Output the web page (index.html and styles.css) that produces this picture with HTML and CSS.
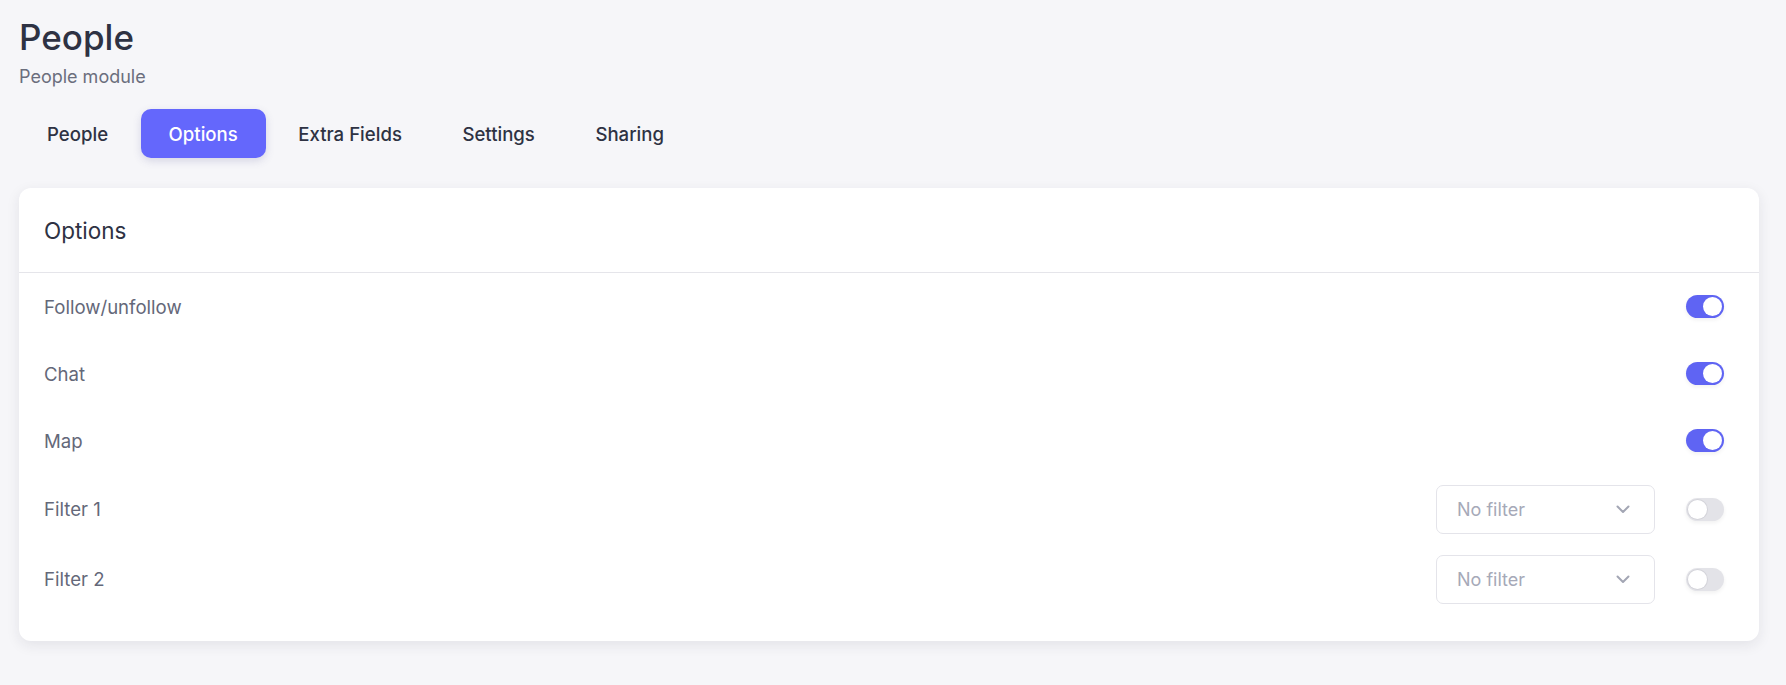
FILE: index.html
```html
<!DOCTYPE html>
<html lang="en">
<head>
  <meta charset="UTF-8">
  <meta name="viewport" content="width=device-width, initial-scale=1.0">
  <title>People</title>
  <link rel="stylesheet" href="styles.css">
</head>
<body>
  <div class="page">
    <h1 class="page-title">People</h1>
    <div class="page-subtitle">People module</div>

    <nav class="tabs">
      <a class="tab">People</a>
      <a class="tab active">Options</a>
      <a class="tab">Extra Fields</a>
      <a class="tab">Settings</a>
      <a class="tab">Sharing</a>
    </nav>

    <div class="card">
      <div class="card-header">Options</div>
      <div class="card-body">
        <div class="option-row">
          <span class="option-label">Follow/unfollow</span>
          <span class="switch on"><span class="knob"></span></span>
        </div>
        <div class="option-row">
          <span class="option-label">Chat</span>
          <span class="switch on"><span class="knob"></span></span>
        </div>
        <div class="option-row">
          <span class="option-label">Map</span>
          <span class="switch on"><span class="knob"></span></span>
        </div>
        <div class="option-row tall">
          <span class="option-label">Filter 1</span>
          <div class="controls">
            <div class="select">
              <span>No filter</span>
              <svg width="14" height="9" viewBox="0 0 14 9"><path d="M1.5 1.5 L7 7 L12.5 1.5" fill="none" stroke="#a3a6b4" stroke-width="2" stroke-linecap="round" stroke-linejoin="round"/></svg>
            </div>
            <span class="switch"><span class="knob"></span></span>
          </div>
        </div>
        <div class="option-row tall">
          <span class="option-label">Filter 2</span>
          <div class="controls">
            <div class="select">
              <span>No filter</span>
              <svg width="14" height="9" viewBox="0 0 14 9"><path d="M1.5 1.5 L7 7 L12.5 1.5" fill="none" stroke="#a3a6b4" stroke-width="2" stroke-linecap="round" stroke-linejoin="round"/></svg>
            </div>
            <span class="switch"><span class="knob"></span></span>
          </div>
        </div>
      </div>
    </div>
  </div>
</body>
</html>
```

FILE: styles.css
```css
body {
  margin: 0;
  padding: 0;
  font-family: Inter, "Noto Sans", sans-serif;
  background: #f6f6f9;
  color: #2e3243;
}

.page {
  padding: 14px 27px 40px 19px;
}

.page-title {
  margin: 0;
  font-size: 35px;
  font-weight: 500;
  line-height: 46px;
  color: #2e3243;
}

.page-subtitle {
  margin-top: 6px;
  font-size: 18px;
  line-height: 22px;
  color: #6b6e7d;
}

.tabs {
  display: flex;
  gap: 4.5px;
  margin-top: 21px;
}

.tab {
  display: flex;
  align-items: center;
  height: 49px;
  padding: 0 28px;
  border-radius: 10px;
  font-size: 18.6px;
  font-weight: 500;
  color: #2e3243;
  cursor: pointer;
}

.tab.active {
  background: #6467fc;
  color: #fff;
  box-shadow: 0 3px 8px rgba(70, 72, 140, 0.18);
}

.card {
  margin-top: 30px;
  background: #fff;
  border-radius: 12px;
  box-shadow: 0 4px 14px rgba(30, 30, 60, 0.09);
}

.card-header {
  height: 84px;
  display: flex;
  align-items: center;
  padding: 0 25px;
  font-size: 22.5px;
  font-weight: 400;
  color: #2e3243;
  border-bottom: 1px solid #e5e5ea;
}

.card-body {
  padding: 0 35px 27px 25px;
}

.option-row {
  display: flex;
  align-items: center;
  justify-content: space-between;
  height: 67px;
}

.option-row.tall {
  height: 70px;
}

.option-label {
  font-size: 18.6px;
  color: #646879;
}

.controls {
  display: flex;
  align-items: center;
  gap: 31px;
}

.select {
  box-sizing: border-box;
  width: 219px;
  height: 49px;
  display: flex;
  align-items: center;
  justify-content: space-between;
  padding: 0 24px 0 20px;
  border: 1px solid #e4e4ea;
  border-radius: 7px;
  font-size: 18px;
  color: #a6a9b8;
}

.switch {
  position: relative;
  width: 38px;
  height: 23px;
  border-radius: 12px;
  background: #e3e3e8;
  box-shadow: 0 2px 4px rgba(0, 0, 0, 0.06);
}

.switch .knob {
  position: absolute;
  top: 2px;
  left: 2px;
  width: 19px;
  height: 19px;
  border-radius: 50%;
  background: #fff;
  box-shadow: 0 0 0 1px #d4d4da;
}

.switch.on {
  background: #5f64f3;
}

.switch.on .knob {
  left: 17px;
  box-shadow: none;
}
```
